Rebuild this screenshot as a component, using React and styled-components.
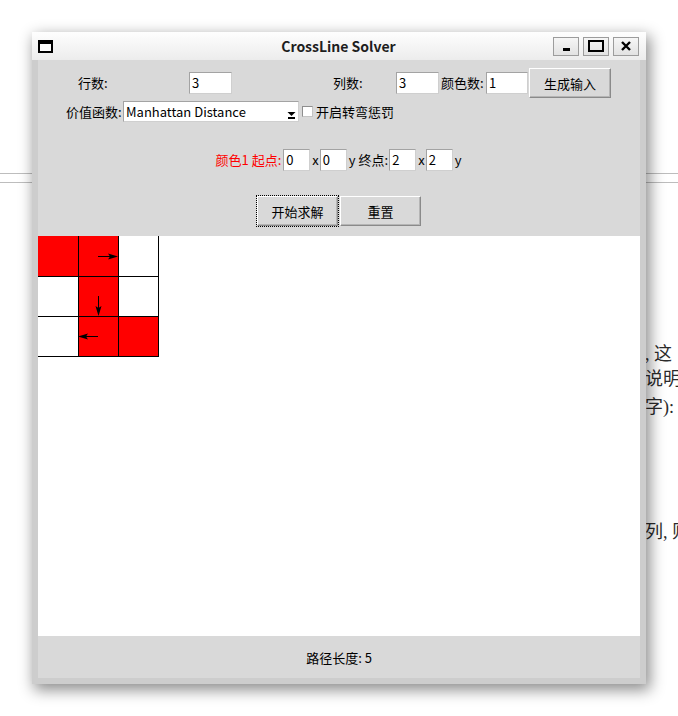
import React from "react";
import styled, { createGlobalStyle } from "styled-components";

const GlobalStyle = createGlobalStyle`
  html, body { margin: 0; padding: 0; background: #fff; }
  body {
    font-family: "Noto Sans CJK SC", "Noto Sans", sans-serif;
    font-size: 13px;
    color: #000;
  }
`;

const Desktop = styled.div`
  position: relative;
  width: 678px;
  height: 716px;
  overflow: hidden;
  background: #fff;
`;

// the document that lies behind the window
const Doc = styled.div`
  display: flex;
  flex-direction: column;
  padding-top: 173px;
`;

const Rule = styled.div`
  height: 1px;
  background: #bdbdbd;
  margin-bottom: ${p => p.$after || 0}px;
`;

const DocLine = styled.p`
  margin: ${p => p.$top || 0}px 0 0;
  padding-left: 645px;
  font-family: "Liberation Serif", "Noto Sans CJK SC", serif;
  font-size: 18px;
  line-height: 26px;
  color: #2b2b2b;
  white-space: nowrap;
`;

const Window = styled.div`
  position: absolute;
  left: 32px;
  top: 32px;
  width: 614px;
  height: 652px;
  box-sizing: border-box;
  display: flex;
  flex-direction: column;
  padding: 0 6px 6px;
  background: #cdcdcd;
  box-shadow: 3px 5px 14px 1px rgba(0, 0, 0, 0.45);
`;

const TitleBar = styled.div`
  height: 28px;
  margin: 0 -6px;
  padding: 0 7px 0 6px;
  display: grid;
  grid-template-columns: 1fr auto 1fr;
  align-items: center;
  background: linear-gradient(#fefefe, #ececec);
`;

const WinIcon = styled.div`
  width: 15px;
  height: 13px;
  box-sizing: border-box;
  border: 2px solid #000;
  border-top-width: 4px;
  background: #fff;
`;

const Title = styled.div`
  font-weight: 700;
  font-size: 14px;
  color: #1e1e1e;
`;

const WinButtons = styled.div`
  justify-self: end;
  display: flex;
  gap: 4px;
`;

const WinButton = styled.div`
  width: 26px;
  height: 19px;
  box-sizing: border-box;
  border: 1px solid #9c9c9c;
  background: linear-gradient(#f6f6f6, #e2e2e2);
  display: flex;
  align-items: center;
  justify-content: center;
`;

const Panel = styled.div`
  height: 176px;
  box-sizing: border-box;
  background: #d9d9d9;
  padding-top: 8px;
  display: flex;
  flex-direction: column;
`;

const Row = styled.div`
  display: flex;
  align-items: center;
  justify-content: ${p => (p.$center ? "center" : "flex-start")};
  padding-left: ${p => p.$pl || 0}px;
  margin-top: ${p => p.$mt || 0}px;
  height: ${p => p.$h}px;
`;

const Label = styled.span`
  box-sizing: border-box;
  width: ${p => (p.$w ? `${p.$w}px` : "auto")};
  padding-left: ${p => p.$indent || 0}px;
  padding-right: ${p => p.$pr || 0}px;
  color: ${p => p.$color || "#000"};
  white-space: nowrap;
  line-height: 18px;
`;

const Field = styled.div`
  width: ${p => p.$w}px;
  height: 22px;
  box-sizing: border-box;
  background: #fff;
  border: 1px solid;
  border-color: #a3a3a3 #cfcfcf #cfcfcf #a3a3a3;
  padding-left: 2px;
  line-height: 20px;
`;

const Combo = styled.div`
  width: 176px;
  height: 21px;
  box-sizing: border-box;
  background: #fff;
  border: 1px solid;
  border-color: #a3a3a3 #cfcfcf #cfcfcf #a3a3a3;
  display: flex;
  align-items: center;
  padding-left: 2px;
  line-height: 19px;
`;

const ComboText = styled.span`
  flex: 1;
`;

const ComboArrow = styled.div`
  width: 13px;
  align-self: stretch;
  display: flex;
  align-items: flex-end;
  justify-content: center;
  padding-bottom: 2px;
`;

const Check = styled.div`
  width: 11px;
  height: 11px;
  box-sizing: border-box;
  background: #fff;
  border: 1px solid;
  border-color: #8e8e8e #c4c4c4 #c4c4c4 #8e8e8e;
  margin: 0 3px;
`;

const Button = styled.div`
  width: ${p => p.$w}px;
  height: 30px;
  box-sizing: border-box;
  margin-left: ${p => p.$ml || 0}px;
  background: #d9d9d9;
  border: 1px solid;
  border-color: #ffffff #8a8a8a #8a8a8a #ffffff;
  box-shadow: inset -1px -1px 0 #b5b5b5;
  display: flex;
  align-items: center;
  justify-content: center;
  outline: ${p => (p.$focus ? "1px dotted #000" : "none")};
  outline-offset: 0;
`;

const Canvas = styled.div`
  flex: 1;
  background: #fff;
  overflow: hidden;
`;

const Status = styled.div`
  height: 42px;
  background: #d9d9d9;
  display: flex;
  align-items: center;
  justify-content: center;
`;

const cells = [
  ["red", "red", "white"],
  ["white", "red", "white"],
  ["white", "red", "red"],
];

function Grid() {
  return (
    <svg width="122" height="122" shapeRendering="crispEdges" style={{ display: "block" }}>
      {cells.map((row, r) =>
        row.map((c, i) => (
          <rect key={`${r}-${i}`} x={i * 40} y={r * 40} width="40" height="40" fill={c === "red" ? "#ff0000" : "#fff"} />
        ))
      )}
      {[40, 80, 120].map(v => (
        <g key={v}>
          <line x1={v + 0.5} y1="0" x2={v + 0.5} y2="121" stroke="#000" />
          <line x1="0" y1={v + 0.5} x2="121" y2={v + 0.5} stroke="#000" />
        </g>
      ))}
      <g shapeRendering="auto">
        <line x1="60" y1="20.5" x2="73" y2="20.5" stroke="#000" />
        <polygon points="80,20.5 70,17.5 72,20.5 70,23.5" fill="#000" />
        <line x1="60.5" y1="60" x2="60.5" y2="73" stroke="#000" />
        <polygon points="60.5,80 57.5,70 60.5,72 63.5,70" fill="#000" />
        <line x1="60" y1="100.5" x2="47" y2="100.5" stroke="#000" />
        <polygon points="40,100.5 50,97.5 48,100.5 50,103.5" fill="#000" />
      </g>
    </svg>
  );
}

export default function App() {
  return (
    <Desktop>
      <GlobalStyle />
      <Doc>
        <Rule $after={8} />
        <Rule />
        <DocLine $top={158}>, 这</DocLine>
        <DocLine $top={-1}>说明</DocLine>
        <DocLine $top={2}>字):</DocLine>
        <DocLine $top={99}>列, 则</DocLine>
      </Doc>

      <Window>
        <TitleBar>
          <WinIcon />
          <Title>CrossLine Solver</Title>
          <WinButtons>
            <WinButton>
              <svg width="10" height="10"><rect x="2" y="7" width="7" height="3" fill="#000" /></svg>
            </WinButton>
            <WinButton>
              <svg width="16" height="12"><rect x="1" y="1" width="14" height="10" fill="none" stroke="#000" strokeWidth="2" /></svg>
            </WinButton>
            <WinButton>
              <svg width="12" height="12">
                <path d="M2 2 L10 10 M10 2 L2 10" stroke="#000" strokeWidth="2.4" />
              </svg>
            </WinButton>
          </WinButtons>
        </TitleBar>

        <Panel>
          <Row $pl={40} $h={30}>
            <Label $w={111}>行数:</Label>
            <Field $w={43}>3</Field>
            <Label $w={164} $indent={101}>列数:</Label>
            <Field $w={43}>3</Field>
            <Label $w={47} $indent={2}>颜色数:</Label>
            <Field $w={42}>1</Field>
            <Button $w={82} $ml={1}>生成输入</Button>
          </Row>
          <Row $pl={28} $h={21} $mt={3}>
            <Label $w={57}>价值函数:</Label>
            <Combo>
              <ComboText>Manhattan Distance</ComboText>
              <ComboArrow>
                <svg width="9" height="7">
                  <polygon points="0.5,0 8.5,0 4.5,4" fill="#000" />
                  <rect x="1" y="5" width="7" height="2" fill="#000" />
                </svg>
              </ComboArrow>
            </Combo>
            <Check />
            <Label>开启转弯惩罚</Label>
          </Row>
          <Row $center $h={22} $mt={27}>
            <Label $color="#ff0000" $pr={2}>颜色1 起点:</Label>
            <Field $w={27}>0</Field>
            <Label $indent={2} $pr={1}>x</Label>
            <Field $w={27}>0</Field>
            <Label $indent={2} $pr={1}>y 终点:</Label>
            <Field $w={27}>2</Field>
            <Label $indent={2} $pr={1}>x</Label>
            <Field $w={27}>2</Field>
            <Label $indent={2} $pr={1}>y</Label>
          </Row>
          <Row $center $h={30} $mt={25}>
            <Button $w={81} $focus>开始求解</Button>
            <Button $w={81} $ml={2}>重置</Button>
          </Row>
        </Panel>

        <Canvas>
          <Grid />
        </Canvas>

        <Status>路径长度: 5</Status>
      </Window>
    </Desktop>
  );
}
